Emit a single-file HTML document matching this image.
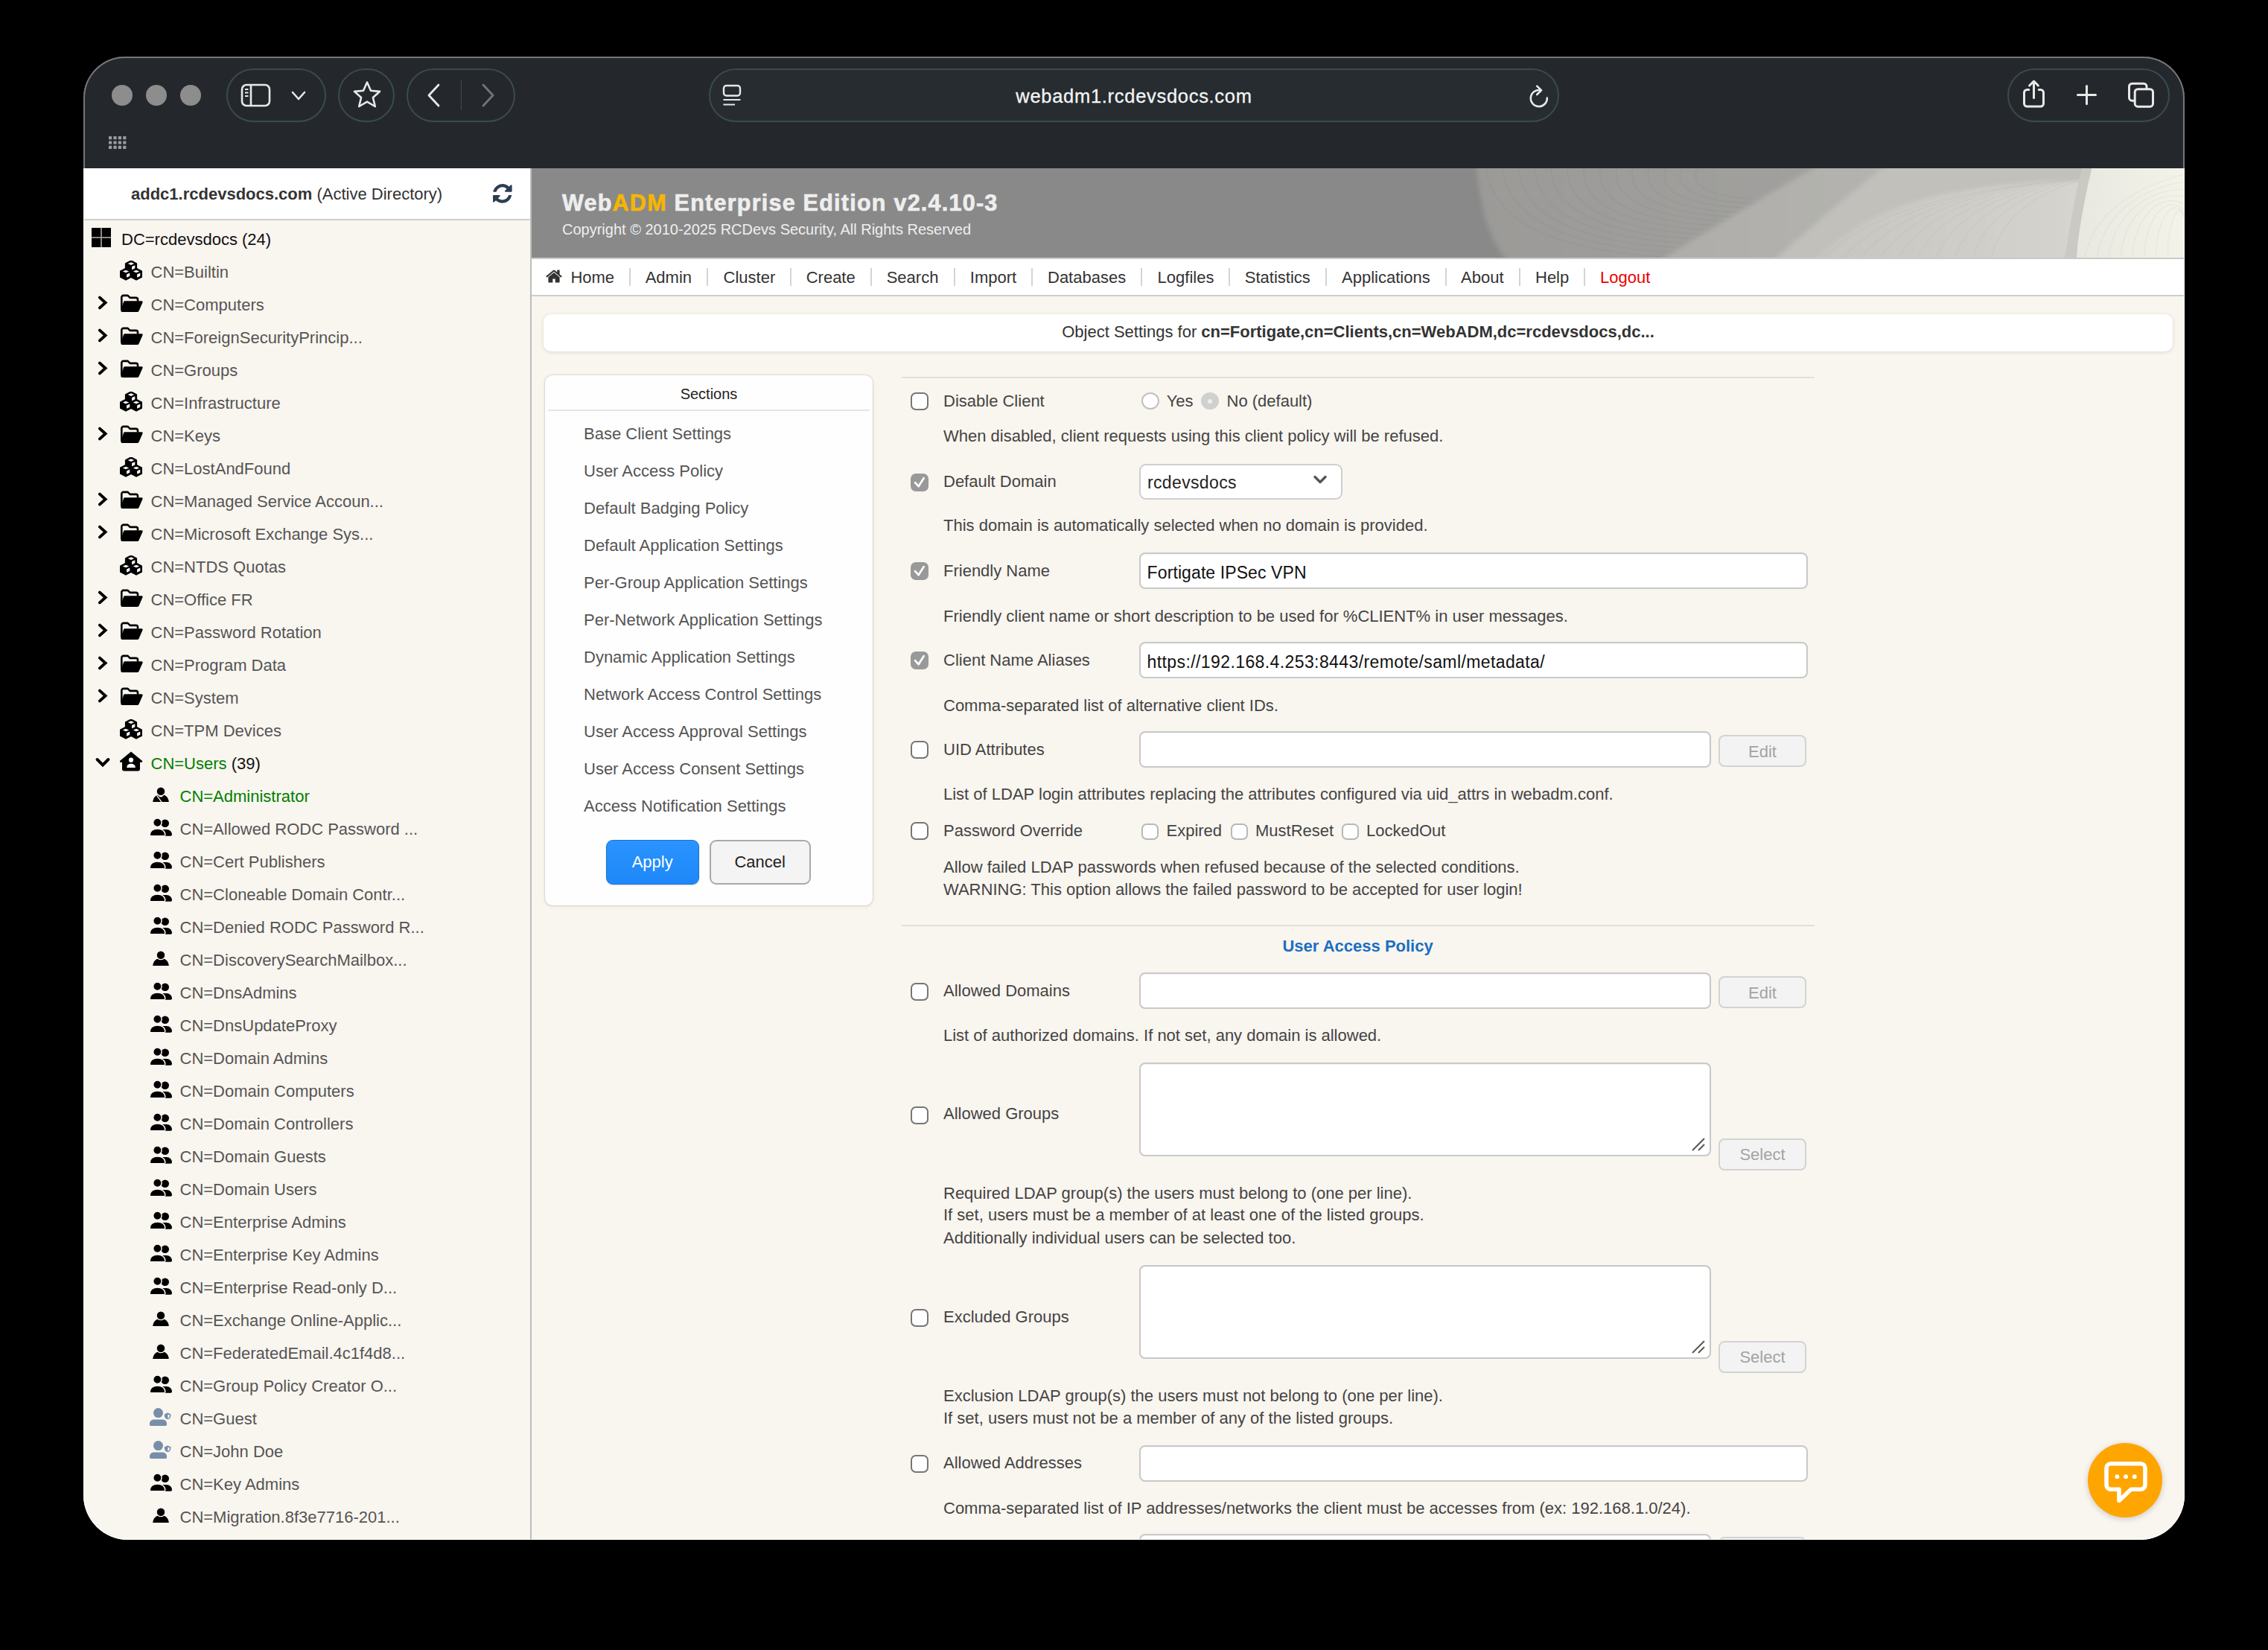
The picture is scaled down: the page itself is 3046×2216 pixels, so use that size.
<!DOCTYPE html>
<html><head><meta charset="utf-8"><title>WebADM</title>
<style>
html,body{margin:0;padding:0;}
body{width:3046px;height:2216px;background:#000;position:relative;overflow:hidden;font-family:"Liberation Sans",sans-serif;}
#win{position:absolute;left:112px;top:76px;width:2822px;height:1992px;border-radius:56px 56px 60px 60px;overflow:hidden;background:#f9f5ef;}
#frame{position:absolute;left:112px;top:76px;width:2822px;height:1992px;border-radius:56px 56px 60px 60px;box-sizing:border-box;border:2.2px solid #73777a;pointer-events:none;
  -webkit-mask:linear-gradient(#000 0,#000 150px,transparent 150px);}
#frame2{position:absolute;left:112px;top:76px;width:2822px;height:1992px;border-radius:56px 56px 60px 60px;box-sizing:border-box;border:1px solid rgba(255,255,255,0.85);pointer-events:none;-webkit-mask:linear-gradient(transparent 0,transparent 150px,#000 150px);}
.a{position:absolute;}
.t{position:absolute;white-space:nowrap;font-family:"Liberation Sans",sans-serif;}
</style></head>
<body>
<div id="win">
<div class="a" style="left:0.0px;top:0.0px;width:2822.0px;height:150.0px;background:#24282c;"></div>
<div class="a" style="left:38.0px;top:38.0px;width:28.0px;height:28.0px;background:#8d8d8d;border-radius:50%;"></div>
<div class="a" style="left:84.0px;top:38.0px;width:28.0px;height:28.0px;background:#8d8d8d;border-radius:50%;"></div>
<div class="a" style="left:130.0px;top:38.0px;width:28.0px;height:28.0px;background:#8d8d8d;border-radius:50%;"></div>
<svg class="a" style="left:34.0px;top:107.0px;" width="24" height="18" viewBox="0 0 24 18"><rect x="0.0" y="0.0" width="4.2" height="4.2" rx="0.6" fill="#9a9c9e"/><rect x="6.4" y="0.0" width="4.2" height="4.2" rx="0.6" fill="#9a9c9e"/><rect x="12.8" y="0.0" width="4.2" height="4.2" rx="0.6" fill="#9a9c9e"/><rect x="19.2" y="0.0" width="4.2" height="4.2" rx="0.6" fill="#9a9c9e"/><rect x="0.0" y="6.4" width="4.2" height="4.2" rx="0.6" fill="#9a9c9e"/><rect x="6.4" y="6.4" width="4.2" height="4.2" rx="0.6" fill="#9a9c9e"/><rect x="12.8" y="6.4" width="4.2" height="4.2" rx="0.6" fill="#9a9c9e"/><rect x="19.2" y="6.4" width="4.2" height="4.2" rx="0.6" fill="#9a9c9e"/><rect x="0.0" y="12.8" width="4.2" height="4.2" rx="0.6" fill="#9a9c9e"/><rect x="6.4" y="12.8" width="4.2" height="4.2" rx="0.6" fill="#9a9c9e"/><rect x="12.8" y="12.8" width="4.2" height="4.2" rx="0.6" fill="#9a9c9e"/><rect x="19.2" y="12.8" width="4.2" height="4.2" rx="0.6" fill="#9a9c9e"/></svg>
<div class="a" style="left:192.0px;top:16.0px;width:134.0px;height:72.0px;border:2px solid #3a4a52;border-radius:40px;box-sizing:border-box;"></div>
<div class="a" style="left:342.0px;top:16.0px;width:76.0px;height:72.0px;border:2px solid #3a4a52;border-radius:40px;box-sizing:border-box;"></div>
<div class="a" style="left:434.0px;top:16.0px;width:146.0px;height:72.0px;border:2px solid #3a4a52;border-radius:40px;box-sizing:border-box;"></div>
<div class="a" style="left:840.0px;top:16.0px;width:1142.0px;height:72.0px;border:2px solid #3a4a52;border-radius:40px;box-sizing:border-box;background:#262c30;"></div>
<div class="a" style="left:2584.0px;top:16.0px;width:218.0px;height:72.0px;border:2px solid #3a4a52;border-radius:40px;box-sizing:border-box;"></div>
<svg class="a" style="left:210.0px;top:35.0px;" width="43" height="34" viewBox="0 0 43 34"><rect x="3" y="3" width="37" height="28" rx="6" fill="none" stroke="#e8e8e8" stroke-width="2.6"/><line x1="15" y1="3" x2="15" y2="31" stroke="#e8e8e8" stroke-width="2.6"/><line x1="7" y1="9" x2="11.5" y2="9" stroke="#e8e8e8" stroke-width="2"/><line x1="7" y1="13.5" x2="11.5" y2="13.5" stroke="#e8e8e8" stroke-width="2"/><line x1="7" y1="18" x2="11.5" y2="18" stroke="#e8e8e8" stroke-width="2"/></svg>
<svg class="a" style="left:277.0px;top:44.0px;" width="24" height="18" viewBox="0 0 24 18"><path d="M4 4 L12 13 L20 4" fill="none" stroke="#e8e8e8" stroke-width="2.6" stroke-linecap="round" stroke-linejoin="round"/></svg>
<svg class="a" style="left:359.0px;top:30.0px;" width="44" height="42" viewBox="0 0 44 42"><path d="M22 4.5 L27 15.8 L39 16.9 L29.9 25 L32.8 37 L22 30.6 L11.2 37 L14.1 25 L5 16.9 L17 15.8 Z" fill="none" stroke="#e8e8e8" stroke-width="2.6" stroke-linejoin="round"/></svg>
<svg class="a" style="left:458.0px;top:34.0px;" width="26" height="36" viewBox="0 0 26 36"><path d="M19 4 L6 18 L19 32" fill="none" stroke="#e8e8e8" stroke-width="2.8" stroke-linecap="round" stroke-linejoin="round"/></svg>
<div class="a" style="left:506.5px;top:32.0px;width:1.5px;height:40.0px;background:#3f4a50;"></div>
<svg class="a" style="left:530.0px;top:34.0px;" width="26" height="36" viewBox="0 0 26 36"><path d="M7 4 L20 18 L7 32" fill="none" stroke="#70757a" stroke-width="2.8" stroke-linecap="round" stroke-linejoin="round"/></svg>
<svg class="a" style="left:857.0px;top:36.0px;" width="28" height="32" viewBox="0 0 28 32"><rect x="3" y="3" width="22" height="13.5" rx="3.5" fill="none" stroke="#e8e8e8" stroke-width="2.4"/><line x1="2.5" y1="22" x2="25.5" y2="22" stroke="#e8e8e8" stroke-width="2.2"/><line x1="2.5" y1="28.5" x2="18" y2="28.5" stroke="#e8e8e8" stroke-width="2.2"/></svg>
<div class="t" style="left:811.0px;width:1200px;text-align:center;top:41px;font-size:25.5px;line-height:25.5px;color:#f4f4f4;font-weight:400;letter-spacing:0.7px;-webkit-text-stroke:0.3px #f4f4f4;">webadm1.rcdevsdocs.com</div>
<svg class="a" style="left:1940.0px;top:36.0px;" width="32" height="34" viewBox="0 0 32 34"><path d="M25.8 19.5 A11 11 0 1 1 17 9.2" fill="none" stroke="#e8e8e8" stroke-width="2.6" stroke-linecap="round"/><path d="M12.2 3.6 L18 9.3 L12.2 15" fill="none" stroke="#e8e8e8" stroke-width="2.6" stroke-linecap="round" stroke-linejoin="round"/></svg>
<svg class="a" style="left:2602.0px;top:28.0px;" width="36" height="44" viewBox="0 0 36 44"><path d="M10.8 16.4 H8.5 A4 4 0 0 0 4.5 20.4 V35.1 A4 4 0 0 0 8.5 39.1 H26.5 A4 4 0 0 0 30.5 35.1 V20.4 A4 4 0 0 0 26.5 16.4 H24.2" fill="none" stroke="#e8e8e8" stroke-width="3" stroke-linecap="round"/><line x1="17.5" y1="6" x2="17.5" y2="27.6" stroke="#e8e8e8" stroke-width="3" stroke-linecap="round"/><path d="M11.6 11 L17.5 5 L23.4 11" fill="none" stroke="#e8e8e8" stroke-width="3" stroke-linecap="round" stroke-linejoin="round"/></svg>
<svg class="a" style="left:2674.0px;top:35.0px;" width="34" height="34" viewBox="0 0 34 34"><line x1="16.5" y1="4.5" x2="16.5" y2="28.5" stroke="#e8e8e8" stroke-width="3" stroke-linecap="round"/><line x1="4.5" y1="16.5" x2="28.5" y2="16.5" stroke="#e8e8e8" stroke-width="3" stroke-linecap="round"/></svg>
<svg class="a" style="left:2743.0px;top:32.0px;" width="42" height="40" viewBox="0 0 42 40"><path d="M12.2 27.2 H8.5 A4 4 0 0 1 4.5 23.2 V8.2 A4 4 0 0 1 8.5 4.2 H24 A4 4 0 0 1 28 8.2 V11.7" fill="none" stroke="#e8e8e8" stroke-width="3"/><rect x="12.2" y="11.7" width="24.3" height="23.5" rx="4" fill="none" stroke="#e8e8e8" stroke-width="3"/></svg>
<div class="a" style="left:0.0px;top:150.0px;width:600.0px;height:1842.0px;background:#f9f5ef;"></div>
<div class="a" style="left:0.0px;top:150.0px;width:600.0px;height:68.0px;background:#fff;"></div>
<div class="a" style="left:0.0px;top:218.0px;width:600.0px;height:2.0px;background:#cfcfcf;"></div>
<div class="a" style="left:600.0px;top:150.0px;width:2.0px;height:1842.0px;background:#bdbdbd;"></div>
<div class="t" style="left:64.0px;top:174px;font-size:22px;line-height:22px;color:#333;font-weight:400;"><b>addc1.rcdevsdocs.com</b> (Active Directory)</div>
<svg class="a" style="left:550.0px;top:171.0px;" width="25.6" height="25.8" viewBox="0 0 1536 1536"><path fill="#2c3e50" d="M1511 928q0 5-1 7-64 268-268 434.5T764 1536q-146 0-282.5-55T239 1324l-129 129q-19 19-45 19t-45-19-19-45V960q0-26 19-45t45-19h448q26 0 45 19t19 45-19 45l-137 137q71 66 161 102t187 36q134 0 250-65t186-179q11-17 53-117 8-23 30-23h192q13 0 22.5 9.5t9.5 22.5zm25-800v448q0 26-19 45t-45 19h-448q-26 0-45-19t-19-45 19-45l138-138Q969 256 768 256q-134 0-250 65T332 500q-11 17-53 117-8 23-30 23H50q-13 0-22.5-9.5T18 608v-7q65-268 270-434.5T768 0q146 0 284 55.5T1297 212l130-129q19-19 45-19t45 19 19 45z"/></svg>
<svg class="a" style="left:11.0px;top:230.0px;" width="26" height="26" viewBox="0 0 26 26"><rect x="0" y="0" width="26" height="26" fill="#000"/><line x1="13" y1="0" x2="13" y2="26" stroke="#9a9792" stroke-width="1.8"/><line x1="0" y1="13" x2="26" y2="13" stroke="#9a9792" stroke-width="1.8"/></svg>
<div class="t" style="left:51.0px;top:235px;font-size:22px;line-height:22px;color:#111;font-weight:400;">DC=rcdevsdocs (24)</div>
<svg class="a" style="left:49.0px;top:274.0px;" width="30" height="27" viewBox="0 0 30 27"><polygon points="15,0.20000000000000018 22.2,4.0 22.2,11.6 15,15.399999999999999 7.8,11.6 7.8,4.0" fill="#000" stroke="#000" stroke-width="1.8" stroke-linejoin="round"/><polygon points="10.8,4.1 15,2.3 19.2,4.1 15,5.9" fill="#fff"/><polygon points="16.1,8.1 20.3,6.199999999999999 20.3,10.4 16.1,12.399999999999999" fill="#fff"/><polygon points="8,10.6 15.2,14.399999999999999 15.2,22.0 8,25.799999999999997 0.7999999999999998,22.0 0.7999999999999998,14.399999999999999" fill="#000" stroke="#000" stroke-width="1.8" stroke-linejoin="round"/><polygon points="3.8,14.5 8,12.7 12.2,14.5 8,16.3" fill="#fff"/><polygon points="9.1,18.5 13.3,16.599999999999998 13.3,20.8 9.1,22.799999999999997" fill="#fff"/><polygon points="22,10.6 29.2,14.399999999999999 29.2,22.0 22,25.799999999999997 14.8,22.0 14.8,14.399999999999999" fill="#000" stroke="#000" stroke-width="1.8" stroke-linejoin="round"/><polygon points="17.8,14.5 22,12.7 26.2,14.5 22,16.3" fill="#fff"/><polygon points="23.1,18.5 27.3,16.599999999999998 27.3,20.8 23.1,22.799999999999997" fill="#fff"/></svg>
<div class="t" style="left:90.5px;top:279px;font-size:22px;line-height:22px;color:#555;font-weight:400;">CN=Builtin</div>
<svg class="a" style="left:48.5px;top:318.7px;" width="31" height="25" viewBox="0 0 31 25"><path d="M2.3 21 V4.3 A2.4 2.4 0 0 1 4.7 1.9 H10.6 L13.6 4.9 H21.6 A2.4 2.4 0 0 1 24 7.3 V9.6" fill="none" stroke="#000" stroke-width="2.6" stroke-linejoin="round"/><path d="M6.4 9.2 H29 A1.6 1.6 0 0 1 30.4 11.4 L25.6 22.4 A2.6 2.6 0 0 1 23.2 24 H3.2 A2 2 0 0 1 1.2 22 L5 10.4 A1.8 1.8 0 0 1 6.4 9.2 Z" fill="#000"/></svg>
<svg class="a" style="left:19.0px;top:320.5px;" width="14" height="19" viewBox="0 0 14 19"><path d="M3 2.6 L10.6 9.5 L3 16.4" fill="none" stroke="#000" stroke-width="3.9" stroke-linecap="round" stroke-linejoin="miter"/></svg>
<div class="t" style="left:90.5px;top:323px;font-size:22px;line-height:22px;color:#555;font-weight:400;">CN=Computers</div>
<svg class="a" style="left:48.5px;top:362.7px;" width="31" height="25" viewBox="0 0 31 25"><path d="M2.3 21 V4.3 A2.4 2.4 0 0 1 4.7 1.9 H10.6 L13.6 4.9 H21.6 A2.4 2.4 0 0 1 24 7.3 V9.6" fill="none" stroke="#000" stroke-width="2.6" stroke-linejoin="round"/><path d="M6.4 9.2 H29 A1.6 1.6 0 0 1 30.4 11.4 L25.6 22.4 A2.6 2.6 0 0 1 23.2 24 H3.2 A2 2 0 0 1 1.2 22 L5 10.4 A1.8 1.8 0 0 1 6.4 9.2 Z" fill="#000"/></svg>
<svg class="a" style="left:19.0px;top:364.5px;" width="14" height="19" viewBox="0 0 14 19"><path d="M3 2.6 L10.6 9.5 L3 16.4" fill="none" stroke="#000" stroke-width="3.9" stroke-linecap="round" stroke-linejoin="miter"/></svg>
<div class="t" style="left:90.5px;top:367px;font-size:22px;line-height:22px;color:#555;font-weight:400;">CN=ForeignSecurityPrincip...</div>
<svg class="a" style="left:48.5px;top:406.7px;" width="31" height="25" viewBox="0 0 31 25"><path d="M2.3 21 V4.3 A2.4 2.4 0 0 1 4.7 1.9 H10.6 L13.6 4.9 H21.6 A2.4 2.4 0 0 1 24 7.3 V9.6" fill="none" stroke="#000" stroke-width="2.6" stroke-linejoin="round"/><path d="M6.4 9.2 H29 A1.6 1.6 0 0 1 30.4 11.4 L25.6 22.4 A2.6 2.6 0 0 1 23.2 24 H3.2 A2 2 0 0 1 1.2 22 L5 10.4 A1.8 1.8 0 0 1 6.4 9.2 Z" fill="#000"/></svg>
<svg class="a" style="left:19.0px;top:408.5px;" width="14" height="19" viewBox="0 0 14 19"><path d="M3 2.6 L10.6 9.5 L3 16.4" fill="none" stroke="#000" stroke-width="3.9" stroke-linecap="round" stroke-linejoin="miter"/></svg>
<div class="t" style="left:90.5px;top:411px;font-size:22px;line-height:22px;color:#555;font-weight:400;">CN=Groups</div>
<svg class="a" style="left:49.0px;top:450.0px;" width="30" height="27" viewBox="0 0 30 27"><polygon points="15,0.20000000000000018 22.2,4.0 22.2,11.6 15,15.399999999999999 7.8,11.6 7.8,4.0" fill="#000" stroke="#000" stroke-width="1.8" stroke-linejoin="round"/><polygon points="10.8,4.1 15,2.3 19.2,4.1 15,5.9" fill="#fff"/><polygon points="16.1,8.1 20.3,6.199999999999999 20.3,10.4 16.1,12.399999999999999" fill="#fff"/><polygon points="8,10.6 15.2,14.399999999999999 15.2,22.0 8,25.799999999999997 0.7999999999999998,22.0 0.7999999999999998,14.399999999999999" fill="#000" stroke="#000" stroke-width="1.8" stroke-linejoin="round"/><polygon points="3.8,14.5 8,12.7 12.2,14.5 8,16.3" fill="#fff"/><polygon points="9.1,18.5 13.3,16.599999999999998 13.3,20.8 9.1,22.799999999999997" fill="#fff"/><polygon points="22,10.6 29.2,14.399999999999999 29.2,22.0 22,25.799999999999997 14.8,22.0 14.8,14.399999999999999" fill="#000" stroke="#000" stroke-width="1.8" stroke-linejoin="round"/><polygon points="17.8,14.5 22,12.7 26.2,14.5 22,16.3" fill="#fff"/><polygon points="23.1,18.5 27.3,16.599999999999998 27.3,20.8 23.1,22.799999999999997" fill="#fff"/></svg>
<div class="t" style="left:90.5px;top:455px;font-size:22px;line-height:22px;color:#555;font-weight:400;">CN=Infrastructure</div>
<svg class="a" style="left:48.5px;top:494.7px;" width="31" height="25" viewBox="0 0 31 25"><path d="M2.3 21 V4.3 A2.4 2.4 0 0 1 4.7 1.9 H10.6 L13.6 4.9 H21.6 A2.4 2.4 0 0 1 24 7.3 V9.6" fill="none" stroke="#000" stroke-width="2.6" stroke-linejoin="round"/><path d="M6.4 9.2 H29 A1.6 1.6 0 0 1 30.4 11.4 L25.6 22.4 A2.6 2.6 0 0 1 23.2 24 H3.2 A2 2 0 0 1 1.2 22 L5 10.4 A1.8 1.8 0 0 1 6.4 9.2 Z" fill="#000"/></svg>
<svg class="a" style="left:19.0px;top:496.5px;" width="14" height="19" viewBox="0 0 14 19"><path d="M3 2.6 L10.6 9.5 L3 16.4" fill="none" stroke="#000" stroke-width="3.9" stroke-linecap="round" stroke-linejoin="miter"/></svg>
<div class="t" style="left:90.5px;top:499px;font-size:22px;line-height:22px;color:#555;font-weight:400;">CN=Keys</div>
<svg class="a" style="left:49.0px;top:538.0px;" width="30" height="27" viewBox="0 0 30 27"><polygon points="15,0.20000000000000018 22.2,4.0 22.2,11.6 15,15.399999999999999 7.8,11.6 7.8,4.0" fill="#000" stroke="#000" stroke-width="1.8" stroke-linejoin="round"/><polygon points="10.8,4.1 15,2.3 19.2,4.1 15,5.9" fill="#fff"/><polygon points="16.1,8.1 20.3,6.199999999999999 20.3,10.4 16.1,12.399999999999999" fill="#fff"/><polygon points="8,10.6 15.2,14.399999999999999 15.2,22.0 8,25.799999999999997 0.7999999999999998,22.0 0.7999999999999998,14.399999999999999" fill="#000" stroke="#000" stroke-width="1.8" stroke-linejoin="round"/><polygon points="3.8,14.5 8,12.7 12.2,14.5 8,16.3" fill="#fff"/><polygon points="9.1,18.5 13.3,16.599999999999998 13.3,20.8 9.1,22.799999999999997" fill="#fff"/><polygon points="22,10.6 29.2,14.399999999999999 29.2,22.0 22,25.799999999999997 14.8,22.0 14.8,14.399999999999999" fill="#000" stroke="#000" stroke-width="1.8" stroke-linejoin="round"/><polygon points="17.8,14.5 22,12.7 26.2,14.5 22,16.3" fill="#fff"/><polygon points="23.1,18.5 27.3,16.599999999999998 27.3,20.8 23.1,22.799999999999997" fill="#fff"/></svg>
<div class="t" style="left:90.5px;top:543px;font-size:22px;line-height:22px;color:#555;font-weight:400;">CN=LostAndFound</div>
<svg class="a" style="left:48.5px;top:582.7px;" width="31" height="25" viewBox="0 0 31 25"><path d="M2.3 21 V4.3 A2.4 2.4 0 0 1 4.7 1.9 H10.6 L13.6 4.9 H21.6 A2.4 2.4 0 0 1 24 7.3 V9.6" fill="none" stroke="#000" stroke-width="2.6" stroke-linejoin="round"/><path d="M6.4 9.2 H29 A1.6 1.6 0 0 1 30.4 11.4 L25.6 22.4 A2.6 2.6 0 0 1 23.2 24 H3.2 A2 2 0 0 1 1.2 22 L5 10.4 A1.8 1.8 0 0 1 6.4 9.2 Z" fill="#000"/></svg>
<svg class="a" style="left:19.0px;top:584.5px;" width="14" height="19" viewBox="0 0 14 19"><path d="M3 2.6 L10.6 9.5 L3 16.4" fill="none" stroke="#000" stroke-width="3.9" stroke-linecap="round" stroke-linejoin="miter"/></svg>
<div class="t" style="left:90.5px;top:587px;font-size:22px;line-height:22px;color:#555;font-weight:400;">CN=Managed Service Accoun...</div>
<svg class="a" style="left:48.5px;top:626.7px;" width="31" height="25" viewBox="0 0 31 25"><path d="M2.3 21 V4.3 A2.4 2.4 0 0 1 4.7 1.9 H10.6 L13.6 4.9 H21.6 A2.4 2.4 0 0 1 24 7.3 V9.6" fill="none" stroke="#000" stroke-width="2.6" stroke-linejoin="round"/><path d="M6.4 9.2 H29 A1.6 1.6 0 0 1 30.4 11.4 L25.6 22.4 A2.6 2.6 0 0 1 23.2 24 H3.2 A2 2 0 0 1 1.2 22 L5 10.4 A1.8 1.8 0 0 1 6.4 9.2 Z" fill="#000"/></svg>
<svg class="a" style="left:19.0px;top:628.5px;" width="14" height="19" viewBox="0 0 14 19"><path d="M3 2.6 L10.6 9.5 L3 16.4" fill="none" stroke="#000" stroke-width="3.9" stroke-linecap="round" stroke-linejoin="miter"/></svg>
<div class="t" style="left:90.5px;top:631px;font-size:22px;line-height:22px;color:#555;font-weight:400;">CN=Microsoft Exchange Sys...</div>
<svg class="a" style="left:49.0px;top:670.0px;" width="30" height="27" viewBox="0 0 30 27"><polygon points="15,0.20000000000000018 22.2,4.0 22.2,11.6 15,15.399999999999999 7.8,11.6 7.8,4.0" fill="#000" stroke="#000" stroke-width="1.8" stroke-linejoin="round"/><polygon points="10.8,4.1 15,2.3 19.2,4.1 15,5.9" fill="#fff"/><polygon points="16.1,8.1 20.3,6.199999999999999 20.3,10.4 16.1,12.399999999999999" fill="#fff"/><polygon points="8,10.6 15.2,14.399999999999999 15.2,22.0 8,25.799999999999997 0.7999999999999998,22.0 0.7999999999999998,14.399999999999999" fill="#000" stroke="#000" stroke-width="1.8" stroke-linejoin="round"/><polygon points="3.8,14.5 8,12.7 12.2,14.5 8,16.3" fill="#fff"/><polygon points="9.1,18.5 13.3,16.599999999999998 13.3,20.8 9.1,22.799999999999997" fill="#fff"/><polygon points="22,10.6 29.2,14.399999999999999 29.2,22.0 22,25.799999999999997 14.8,22.0 14.8,14.399999999999999" fill="#000" stroke="#000" stroke-width="1.8" stroke-linejoin="round"/><polygon points="17.8,14.5 22,12.7 26.2,14.5 22,16.3" fill="#fff"/><polygon points="23.1,18.5 27.3,16.599999999999998 27.3,20.8 23.1,22.799999999999997" fill="#fff"/></svg>
<div class="t" style="left:90.5px;top:675px;font-size:22px;line-height:22px;color:#555;font-weight:400;">CN=NTDS Quotas</div>
<svg class="a" style="left:48.5px;top:714.7px;" width="31" height="25" viewBox="0 0 31 25"><path d="M2.3 21 V4.3 A2.4 2.4 0 0 1 4.7 1.9 H10.6 L13.6 4.9 H21.6 A2.4 2.4 0 0 1 24 7.3 V9.6" fill="none" stroke="#000" stroke-width="2.6" stroke-linejoin="round"/><path d="M6.4 9.2 H29 A1.6 1.6 0 0 1 30.4 11.4 L25.6 22.4 A2.6 2.6 0 0 1 23.2 24 H3.2 A2 2 0 0 1 1.2 22 L5 10.4 A1.8 1.8 0 0 1 6.4 9.2 Z" fill="#000"/></svg>
<svg class="a" style="left:19.0px;top:716.5px;" width="14" height="19" viewBox="0 0 14 19"><path d="M3 2.6 L10.6 9.5 L3 16.4" fill="none" stroke="#000" stroke-width="3.9" stroke-linecap="round" stroke-linejoin="miter"/></svg>
<div class="t" style="left:90.5px;top:719px;font-size:22px;line-height:22px;color:#555;font-weight:400;">CN=Office FR</div>
<svg class="a" style="left:48.5px;top:758.7px;" width="31" height="25" viewBox="0 0 31 25"><path d="M2.3 21 V4.3 A2.4 2.4 0 0 1 4.7 1.9 H10.6 L13.6 4.9 H21.6 A2.4 2.4 0 0 1 24 7.3 V9.6" fill="none" stroke="#000" stroke-width="2.6" stroke-linejoin="round"/><path d="M6.4 9.2 H29 A1.6 1.6 0 0 1 30.4 11.4 L25.6 22.4 A2.6 2.6 0 0 1 23.2 24 H3.2 A2 2 0 0 1 1.2 22 L5 10.4 A1.8 1.8 0 0 1 6.4 9.2 Z" fill="#000"/></svg>
<svg class="a" style="left:19.0px;top:760.5px;" width="14" height="19" viewBox="0 0 14 19"><path d="M3 2.6 L10.6 9.5 L3 16.4" fill="none" stroke="#000" stroke-width="3.9" stroke-linecap="round" stroke-linejoin="miter"/></svg>
<div class="t" style="left:90.5px;top:763px;font-size:22px;line-height:22px;color:#555;font-weight:400;">CN=Password Rotation</div>
<svg class="a" style="left:48.5px;top:802.7px;" width="31" height="25" viewBox="0 0 31 25"><path d="M2.3 21 V4.3 A2.4 2.4 0 0 1 4.7 1.9 H10.6 L13.6 4.9 H21.6 A2.4 2.4 0 0 1 24 7.3 V9.6" fill="none" stroke="#000" stroke-width="2.6" stroke-linejoin="round"/><path d="M6.4 9.2 H29 A1.6 1.6 0 0 1 30.4 11.4 L25.6 22.4 A2.6 2.6 0 0 1 23.2 24 H3.2 A2 2 0 0 1 1.2 22 L5 10.4 A1.8 1.8 0 0 1 6.4 9.2 Z" fill="#000"/></svg>
<svg class="a" style="left:19.0px;top:804.5px;" width="14" height="19" viewBox="0 0 14 19"><path d="M3 2.6 L10.6 9.5 L3 16.4" fill="none" stroke="#000" stroke-width="3.9" stroke-linecap="round" stroke-linejoin="miter"/></svg>
<div class="t" style="left:90.5px;top:807px;font-size:22px;line-height:22px;color:#555;font-weight:400;">CN=Program Data</div>
<svg class="a" style="left:48.5px;top:846.7px;" width="31" height="25" viewBox="0 0 31 25"><path d="M2.3 21 V4.3 A2.4 2.4 0 0 1 4.7 1.9 H10.6 L13.6 4.9 H21.6 A2.4 2.4 0 0 1 24 7.3 V9.6" fill="none" stroke="#000" stroke-width="2.6" stroke-linejoin="round"/><path d="M6.4 9.2 H29 A1.6 1.6 0 0 1 30.4 11.4 L25.6 22.4 A2.6 2.6 0 0 1 23.2 24 H3.2 A2 2 0 0 1 1.2 22 L5 10.4 A1.8 1.8 0 0 1 6.4 9.2 Z" fill="#000"/></svg>
<svg class="a" style="left:19.0px;top:848.5px;" width="14" height="19" viewBox="0 0 14 19"><path d="M3 2.6 L10.6 9.5 L3 16.4" fill="none" stroke="#000" stroke-width="3.9" stroke-linecap="round" stroke-linejoin="miter"/></svg>
<div class="t" style="left:90.5px;top:851px;font-size:22px;line-height:22px;color:#555;font-weight:400;">CN=System</div>
<svg class="a" style="left:49.0px;top:890.0px;" width="30" height="27" viewBox="0 0 30 27"><polygon points="15,0.20000000000000018 22.2,4.0 22.2,11.6 15,15.399999999999999 7.8,11.6 7.8,4.0" fill="#000" stroke="#000" stroke-width="1.8" stroke-linejoin="round"/><polygon points="10.8,4.1 15,2.3 19.2,4.1 15,5.9" fill="#fff"/><polygon points="16.1,8.1 20.3,6.199999999999999 20.3,10.4 16.1,12.399999999999999" fill="#fff"/><polygon points="8,10.6 15.2,14.399999999999999 15.2,22.0 8,25.799999999999997 0.7999999999999998,22.0 0.7999999999999998,14.399999999999999" fill="#000" stroke="#000" stroke-width="1.8" stroke-linejoin="round"/><polygon points="3.8,14.5 8,12.7 12.2,14.5 8,16.3" fill="#fff"/><polygon points="9.1,18.5 13.3,16.599999999999998 13.3,20.8 9.1,22.799999999999997" fill="#fff"/><polygon points="22,10.6 29.2,14.399999999999999 29.2,22.0 22,25.799999999999997 14.8,22.0 14.8,14.399999999999999" fill="#000" stroke="#000" stroke-width="1.8" stroke-linejoin="round"/><polygon points="17.8,14.5 22,12.7 26.2,14.5 22,16.3" fill="#fff"/><polygon points="23.1,18.5 27.3,16.599999999999998 27.3,20.8 23.1,22.799999999999997" fill="#fff"/></svg>
<div class="t" style="left:90.5px;top:895px;font-size:22px;line-height:22px;color:#555;font-weight:400;">CN=TPM Devices</div>
<svg class="a" style="left:49.0px;top:933.4px;" width="31" height="28" viewBox="0 0 31 28"><path d="M15 0.4 L29.6 12.6 Q30.8 13.8 29.6 14.8 L27 14.8 V23.8 A2.6 2.6 0 0 1 24.4 26.4 H5.6 A2.6 2.6 0 0 1 3 23.8 V14.8 L0.4 14.8 Q-0.8 13.8 0.4 12.6 Z" fill="#000"/><circle cx="15" cy="11.7" r="3.1" fill="#fff"/><path d="M9.3 21.4 C9.3 18.6 11.8 16.7 15 16.7 C18.2 16.7 20.8 18.6 20.8 21.4 V22 H9.3 Z" fill="#fff"/></svg>
<svg class="a" style="left:16.0px;top:940.5px;" width="20" height="14" viewBox="0 0 20 14"><path d="M2.6 3 L10 10.4 L17.4 3" fill="none" stroke="#000" stroke-width="3.9" stroke-linecap="round" stroke-linejoin="miter"/></svg>
<div class="t" style="left:90.5px;top:939px;font-size:22px;line-height:22px;color:#111;font-weight:400;"><span style="color:#008000">CN=Users</span> (39)</div>
<svg class="a" style="left:93.0px;top:981.0px;" width="22" height="21" viewBox="0 0 22 21"><path d="M0.2 19.9 C0.7 14.6 4.2 10.8 8 10.6 H14 C17.8 10.8 21.3 14.6 21.8 19.9 Z" fill="#000"/><path d="M7.2 11 L11 14.8 L14.8 11 Z" fill="#fff"/><path d="M10.2 13.2 H11.8 L12.2 16 L11 17 L9.8 16 Z" fill="#000"/><line x1="5.6" y1="11.4" x2="12" y2="20.2" stroke="#fff" stroke-width="1.3"/><circle cx="11" cy="5.8" r="5.9" fill="#000" stroke="#f9f5ef" stroke-width="1.3"/></svg>
<div class="t" style="left:129.5px;top:983px;font-size:22px;line-height:22px;color:#008000;font-weight:400;">CN=Administrator</div>
<svg class="a" style="left:89.0px;top:1021.0px;" width="31" height="27" viewBox="0 0 31 27"><circle cx="20.7" cy="8.7" r="5.3" fill="#000"/><path d="M17 17 H22.5 C26.8 17 30 20.2 30 24 A1.8 1.8 0 0 1 28.2 25.8 H20 Z" fill="#000"/><circle cx="10.4" cy="7.8" r="5.7" fill="#000" stroke="#f9f5ef" stroke-width="1.5"/><path d="M0.2 24 C0.2 19.5 4.5 15.9 10.5 15.9 C16.5 15.9 20.8 19.5 20.8 24 A1.8 1.8 0 0 1 19 25.8 H2 A1.8 1.8 0 0 1 0.2 24 Z" fill="#000" stroke="#f9f5ef" stroke-width="1.5"/></svg>
<div class="t" style="left:129.5px;top:1027px;font-size:22px;line-height:22px;color:#555;font-weight:400;">CN=Allowed RODC Password ...</div>
<svg class="a" style="left:89.0px;top:1065.0px;" width="31" height="27" viewBox="0 0 31 27"><circle cx="20.7" cy="8.7" r="5.3" fill="#000"/><path d="M17 17 H22.5 C26.8 17 30 20.2 30 24 A1.8 1.8 0 0 1 28.2 25.8 H20 Z" fill="#000"/><circle cx="10.4" cy="7.8" r="5.7" fill="#000" stroke="#f9f5ef" stroke-width="1.5"/><path d="M0.2 24 C0.2 19.5 4.5 15.9 10.5 15.9 C16.5 15.9 20.8 19.5 20.8 24 A1.8 1.8 0 0 1 19 25.8 H2 A1.8 1.8 0 0 1 0.2 24 Z" fill="#000" stroke="#f9f5ef" stroke-width="1.5"/></svg>
<div class="t" style="left:129.5px;top:1071px;font-size:22px;line-height:22px;color:#555;font-weight:400;">CN=Cert Publishers</div>
<svg class="a" style="left:89.0px;top:1109.0px;" width="31" height="27" viewBox="0 0 31 27"><circle cx="20.7" cy="8.7" r="5.3" fill="#000"/><path d="M17 17 H22.5 C26.8 17 30 20.2 30 24 A1.8 1.8 0 0 1 28.2 25.8 H20 Z" fill="#000"/><circle cx="10.4" cy="7.8" r="5.7" fill="#000" stroke="#f9f5ef" stroke-width="1.5"/><path d="M0.2 24 C0.2 19.5 4.5 15.9 10.5 15.9 C16.5 15.9 20.8 19.5 20.8 24 A1.8 1.8 0 0 1 19 25.8 H2 A1.8 1.8 0 0 1 0.2 24 Z" fill="#000" stroke="#f9f5ef" stroke-width="1.5"/></svg>
<div class="t" style="left:129.5px;top:1115px;font-size:22px;line-height:22px;color:#555;font-weight:400;">CN=Cloneable Domain Contr...</div>
<svg class="a" style="left:89.0px;top:1153.0px;" width="31" height="27" viewBox="0 0 31 27"><circle cx="20.7" cy="8.7" r="5.3" fill="#000"/><path d="M17 17 H22.5 C26.8 17 30 20.2 30 24 A1.8 1.8 0 0 1 28.2 25.8 H20 Z" fill="#000"/><circle cx="10.4" cy="7.8" r="5.7" fill="#000" stroke="#f9f5ef" stroke-width="1.5"/><path d="M0.2 24 C0.2 19.5 4.5 15.9 10.5 15.9 C16.5 15.9 20.8 19.5 20.8 24 A1.8 1.8 0 0 1 19 25.8 H2 A1.8 1.8 0 0 1 0.2 24 Z" fill="#000" stroke="#f9f5ef" stroke-width="1.5"/></svg>
<div class="t" style="left:129.5px;top:1159px;font-size:22px;line-height:22px;color:#555;font-weight:400;">CN=Denied RODC Password R...</div>
<svg class="a" style="left:93.0px;top:1201.0px;" width="22" height="21" viewBox="0 0 22 21"><path d="M0.2 19.9 C0.7 14.6 4.2 10.8 8 10.6 H14 C17.8 10.8 21.3 14.6 21.8 19.9 Z" fill="#000"/><circle cx="11" cy="5.8" r="5.9" fill="#000" stroke="#f9f5ef" stroke-width="1.3"/></svg>
<div class="t" style="left:129.5px;top:1203px;font-size:22px;line-height:22px;color:#555;font-weight:400;">CN=DiscoverySearchMailbox...</div>
<svg class="a" style="left:89.0px;top:1241.0px;" width="31" height="27" viewBox="0 0 31 27"><circle cx="20.7" cy="8.7" r="5.3" fill="#000"/><path d="M17 17 H22.5 C26.8 17 30 20.2 30 24 A1.8 1.8 0 0 1 28.2 25.8 H20 Z" fill="#000"/><circle cx="10.4" cy="7.8" r="5.7" fill="#000" stroke="#f9f5ef" stroke-width="1.5"/><path d="M0.2 24 C0.2 19.5 4.5 15.9 10.5 15.9 C16.5 15.9 20.8 19.5 20.8 24 A1.8 1.8 0 0 1 19 25.8 H2 A1.8 1.8 0 0 1 0.2 24 Z" fill="#000" stroke="#f9f5ef" stroke-width="1.5"/></svg>
<div class="t" style="left:129.5px;top:1247px;font-size:22px;line-height:22px;color:#555;font-weight:400;">CN=DnsAdmins</div>
<svg class="a" style="left:89.0px;top:1285.0px;" width="31" height="27" viewBox="0 0 31 27"><circle cx="20.7" cy="8.7" r="5.3" fill="#000"/><path d="M17 17 H22.5 C26.8 17 30 20.2 30 24 A1.8 1.8 0 0 1 28.2 25.8 H20 Z" fill="#000"/><circle cx="10.4" cy="7.8" r="5.7" fill="#000" stroke="#f9f5ef" stroke-width="1.5"/><path d="M0.2 24 C0.2 19.5 4.5 15.9 10.5 15.9 C16.5 15.9 20.8 19.5 20.8 24 A1.8 1.8 0 0 1 19 25.8 H2 A1.8 1.8 0 0 1 0.2 24 Z" fill="#000" stroke="#f9f5ef" stroke-width="1.5"/></svg>
<div class="t" style="left:129.5px;top:1291px;font-size:22px;line-height:22px;color:#555;font-weight:400;">CN=DnsUpdateProxy</div>
<svg class="a" style="left:89.0px;top:1329.0px;" width="31" height="27" viewBox="0 0 31 27"><circle cx="20.7" cy="8.7" r="5.3" fill="#000"/><path d="M17 17 H22.5 C26.8 17 30 20.2 30 24 A1.8 1.8 0 0 1 28.2 25.8 H20 Z" fill="#000"/><circle cx="10.4" cy="7.8" r="5.7" fill="#000" stroke="#f9f5ef" stroke-width="1.5"/><path d="M0.2 24 C0.2 19.5 4.5 15.9 10.5 15.9 C16.5 15.9 20.8 19.5 20.8 24 A1.8 1.8 0 0 1 19 25.8 H2 A1.8 1.8 0 0 1 0.2 24 Z" fill="#000" stroke="#f9f5ef" stroke-width="1.5"/></svg>
<div class="t" style="left:129.5px;top:1335px;font-size:22px;line-height:22px;color:#555;font-weight:400;">CN=Domain Admins</div>
<svg class="a" style="left:89.0px;top:1373.0px;" width="31" height="27" viewBox="0 0 31 27"><circle cx="20.7" cy="8.7" r="5.3" fill="#000"/><path d="M17 17 H22.5 C26.8 17 30 20.2 30 24 A1.8 1.8 0 0 1 28.2 25.8 H20 Z" fill="#000"/><circle cx="10.4" cy="7.8" r="5.7" fill="#000" stroke="#f9f5ef" stroke-width="1.5"/><path d="M0.2 24 C0.2 19.5 4.5 15.9 10.5 15.9 C16.5 15.9 20.8 19.5 20.8 24 A1.8 1.8 0 0 1 19 25.8 H2 A1.8 1.8 0 0 1 0.2 24 Z" fill="#000" stroke="#f9f5ef" stroke-width="1.5"/></svg>
<div class="t" style="left:129.5px;top:1379px;font-size:22px;line-height:22px;color:#555;font-weight:400;">CN=Domain Computers</div>
<svg class="a" style="left:89.0px;top:1417.0px;" width="31" height="27" viewBox="0 0 31 27"><circle cx="20.7" cy="8.7" r="5.3" fill="#000"/><path d="M17 17 H22.5 C26.8 17 30 20.2 30 24 A1.8 1.8 0 0 1 28.2 25.8 H20 Z" fill="#000"/><circle cx="10.4" cy="7.8" r="5.7" fill="#000" stroke="#f9f5ef" stroke-width="1.5"/><path d="M0.2 24 C0.2 19.5 4.5 15.9 10.5 15.9 C16.5 15.9 20.8 19.5 20.8 24 A1.8 1.8 0 0 1 19 25.8 H2 A1.8 1.8 0 0 1 0.2 24 Z" fill="#000" stroke="#f9f5ef" stroke-width="1.5"/></svg>
<div class="t" style="left:129.5px;top:1423px;font-size:22px;line-height:22px;color:#555;font-weight:400;">CN=Domain Controllers</div>
<svg class="a" style="left:89.0px;top:1461.0px;" width="31" height="27" viewBox="0 0 31 27"><circle cx="20.7" cy="8.7" r="5.3" fill="#000"/><path d="M17 17 H22.5 C26.8 17 30 20.2 30 24 A1.8 1.8 0 0 1 28.2 25.8 H20 Z" fill="#000"/><circle cx="10.4" cy="7.8" r="5.7" fill="#000" stroke="#f9f5ef" stroke-width="1.5"/><path d="M0.2 24 C0.2 19.5 4.5 15.9 10.5 15.9 C16.5 15.9 20.8 19.5 20.8 24 A1.8 1.8 0 0 1 19 25.8 H2 A1.8 1.8 0 0 1 0.2 24 Z" fill="#000" stroke="#f9f5ef" stroke-width="1.5"/></svg>
<div class="t" style="left:129.5px;top:1467px;font-size:22px;line-height:22px;color:#555;font-weight:400;">CN=Domain Guests</div>
<svg class="a" style="left:89.0px;top:1505.0px;" width="31" height="27" viewBox="0 0 31 27"><circle cx="20.7" cy="8.7" r="5.3" fill="#000"/><path d="M17 17 H22.5 C26.8 17 30 20.2 30 24 A1.8 1.8 0 0 1 28.2 25.8 H20 Z" fill="#000"/><circle cx="10.4" cy="7.8" r="5.7" fill="#000" stroke="#f9f5ef" stroke-width="1.5"/><path d="M0.2 24 C0.2 19.5 4.5 15.9 10.5 15.9 C16.5 15.9 20.8 19.5 20.8 24 A1.8 1.8 0 0 1 19 25.8 H2 A1.8 1.8 0 0 1 0.2 24 Z" fill="#000" stroke="#f9f5ef" stroke-width="1.5"/></svg>
<div class="t" style="left:129.5px;top:1511px;font-size:22px;line-height:22px;color:#555;font-weight:400;">CN=Domain Users</div>
<svg class="a" style="left:89.0px;top:1549.0px;" width="31" height="27" viewBox="0 0 31 27"><circle cx="20.7" cy="8.7" r="5.3" fill="#000"/><path d="M17 17 H22.5 C26.8 17 30 20.2 30 24 A1.8 1.8 0 0 1 28.2 25.8 H20 Z" fill="#000"/><circle cx="10.4" cy="7.8" r="5.7" fill="#000" stroke="#f9f5ef" stroke-width="1.5"/><path d="M0.2 24 C0.2 19.5 4.5 15.9 10.5 15.9 C16.5 15.9 20.8 19.5 20.8 24 A1.8 1.8 0 0 1 19 25.8 H2 A1.8 1.8 0 0 1 0.2 24 Z" fill="#000" stroke="#f9f5ef" stroke-width="1.5"/></svg>
<div class="t" style="left:129.5px;top:1555px;font-size:22px;line-height:22px;color:#555;font-weight:400;">CN=Enterprise Admins</div>
<svg class="a" style="left:89.0px;top:1593.0px;" width="31" height="27" viewBox="0 0 31 27"><circle cx="20.7" cy="8.7" r="5.3" fill="#000"/><path d="M17 17 H22.5 C26.8 17 30 20.2 30 24 A1.8 1.8 0 0 1 28.2 25.8 H20 Z" fill="#000"/><circle cx="10.4" cy="7.8" r="5.7" fill="#000" stroke="#f9f5ef" stroke-width="1.5"/><path d="M0.2 24 C0.2 19.5 4.5 15.9 10.5 15.9 C16.5 15.9 20.8 19.5 20.8 24 A1.8 1.8 0 0 1 19 25.8 H2 A1.8 1.8 0 0 1 0.2 24 Z" fill="#000" stroke="#f9f5ef" stroke-width="1.5"/></svg>
<div class="t" style="left:129.5px;top:1599px;font-size:22px;line-height:22px;color:#555;font-weight:400;">CN=Enterprise Key Admins</div>
<svg class="a" style="left:89.0px;top:1637.0px;" width="31" height="27" viewBox="0 0 31 27"><circle cx="20.7" cy="8.7" r="5.3" fill="#000"/><path d="M17 17 H22.5 C26.8 17 30 20.2 30 24 A1.8 1.8 0 0 1 28.2 25.8 H20 Z" fill="#000"/><circle cx="10.4" cy="7.8" r="5.7" fill="#000" stroke="#f9f5ef" stroke-width="1.5"/><path d="M0.2 24 C0.2 19.5 4.5 15.9 10.5 15.9 C16.5 15.9 20.8 19.5 20.8 24 A1.8 1.8 0 0 1 19 25.8 H2 A1.8 1.8 0 0 1 0.2 24 Z" fill="#000" stroke="#f9f5ef" stroke-width="1.5"/></svg>
<div class="t" style="left:129.5px;top:1643px;font-size:22px;line-height:22px;color:#555;font-weight:400;">CN=Enterprise Read-only D...</div>
<svg class="a" style="left:93.0px;top:1685.0px;" width="22" height="21" viewBox="0 0 22 21"><path d="M0.2 19.9 C0.7 14.6 4.2 10.8 8 10.6 H14 C17.8 10.8 21.3 14.6 21.8 19.9 Z" fill="#000"/><circle cx="11" cy="5.8" r="5.9" fill="#000" stroke="#f9f5ef" stroke-width="1.3"/></svg>
<div class="t" style="left:129.5px;top:1687px;font-size:22px;line-height:22px;color:#555;font-weight:400;">CN=Exchange Online-Applic...</div>
<svg class="a" style="left:93.0px;top:1729.0px;" width="22" height="21" viewBox="0 0 22 21"><path d="M0.2 19.9 C0.7 14.6 4.2 10.8 8 10.6 H14 C17.8 10.8 21.3 14.6 21.8 19.9 Z" fill="#000"/><circle cx="11" cy="5.8" r="5.9" fill="#000" stroke="#f9f5ef" stroke-width="1.3"/></svg>
<div class="t" style="left:129.5px;top:1731px;font-size:22px;line-height:22px;color:#555;font-weight:400;">CN=FederatedEmail.4c1f4d8...</div>
<svg class="a" style="left:89.0px;top:1769.0px;" width="31" height="27" viewBox="0 0 31 27"><circle cx="20.7" cy="8.7" r="5.3" fill="#000"/><path d="M17 17 H22.5 C26.8 17 30 20.2 30 24 A1.8 1.8 0 0 1 28.2 25.8 H20 Z" fill="#000"/><circle cx="10.4" cy="7.8" r="5.7" fill="#000" stroke="#f9f5ef" stroke-width="1.5"/><path d="M0.2 24 C0.2 19.5 4.5 15.9 10.5 15.9 C16.5 15.9 20.8 19.5 20.8 24 A1.8 1.8 0 0 1 19 25.8 H2 A1.8 1.8 0 0 1 0.2 24 Z" fill="#000" stroke="#f9f5ef" stroke-width="1.5"/></svg>
<div class="t" style="left:129.5px;top:1775px;font-size:22px;line-height:22px;color:#555;font-weight:400;">CN=Group Policy Creator O...</div>
<svg class="a" style="left:89.0px;top:1815.0px;" width="31" height="25" viewBox="0 0 31 25"><circle cx="11.5" cy="6.6" r="6.5" fill="#768ea9"/><path d="M0 22.2 V20.8 C0 17.8 2.4 15.4 5.6 15.4 H17.4 C20.6 15.4 23 17.8 23 20.8 V22.2 A1.8 1.8 0 0 1 21.2 24 H1.8 A1.8 1.8 0 0 1 0 22.2 Z" fill="#768ea9"/><path d="M24.15 5.8 L29 7.9 V10 C29 13 27 15.3 24.15 15.9 C21.3 15.3 19.3 13 19.3 10 V7.9 Z" fill="#768ea9" stroke="#f9f5ef" stroke-width="1.2"/><path d="M24.4 8.6 L26.8 9.6 V10.4 C26.8 12.1 25.9 13.4 24.4 14.1 Z" fill="#f9f5ef"/></svg>
<div class="t" style="left:129.5px;top:1819px;font-size:22px;line-height:22px;color:#555;font-weight:400;">CN=Guest</div>
<svg class="a" style="left:89.0px;top:1859.0px;" width="31" height="25" viewBox="0 0 31 25"><circle cx="11.5" cy="6.6" r="6.5" fill="#768ea9"/><path d="M0 22.2 V20.8 C0 17.8 2.4 15.4 5.6 15.4 H17.4 C20.6 15.4 23 17.8 23 20.8 V22.2 A1.8 1.8 0 0 1 21.2 24 H1.8 A1.8 1.8 0 0 1 0 22.2 Z" fill="#768ea9"/><path d="M24.15 5.8 L29 7.9 V10 C29 13 27 15.3 24.15 15.9 C21.3 15.3 19.3 13 19.3 10 V7.9 Z" fill="#768ea9" stroke="#f9f5ef" stroke-width="1.2"/><path d="M24.4 8.6 L26.8 9.6 V10.4 C26.8 12.1 25.9 13.4 24.4 14.1 Z" fill="#f9f5ef"/></svg>
<div class="t" style="left:129.5px;top:1863px;font-size:22px;line-height:22px;color:#555;font-weight:400;">CN=John Doe</div>
<svg class="a" style="left:89.0px;top:1901.0px;" width="31" height="27" viewBox="0 0 31 27"><circle cx="20.7" cy="8.7" r="5.3" fill="#000"/><path d="M17 17 H22.5 C26.8 17 30 20.2 30 24 A1.8 1.8 0 0 1 28.2 25.8 H20 Z" fill="#000"/><circle cx="10.4" cy="7.8" r="5.7" fill="#000" stroke="#f9f5ef" stroke-width="1.5"/><path d="M0.2 24 C0.2 19.5 4.5 15.9 10.5 15.9 C16.5 15.9 20.8 19.5 20.8 24 A1.8 1.8 0 0 1 19 25.8 H2 A1.8 1.8 0 0 1 0.2 24 Z" fill="#000" stroke="#f9f5ef" stroke-width="1.5"/></svg>
<div class="t" style="left:129.5px;top:1907px;font-size:22px;line-height:22px;color:#555;font-weight:400;">CN=Key Admins</div>
<svg class="a" style="left:93.0px;top:1949.0px;" width="22" height="21" viewBox="0 0 22 21"><path d="M0.2 19.9 C0.7 14.6 4.2 10.8 8 10.6 H14 C17.8 10.8 21.3 14.6 21.8 19.9 Z" fill="#000"/><circle cx="11" cy="5.8" r="5.9" fill="#000" stroke="#f9f5ef" stroke-width="1.3"/></svg>
<div class="t" style="left:129.5px;top:1951px;font-size:22px;line-height:22px;color:#555;font-weight:400;">CN=Migration.8f3e7716-201...</div>
<svg class="a" style="left:89.0px;top:1989.0px;" width="31" height="27" viewBox="0 0 31 27"><circle cx="20.7" cy="8.7" r="5.3" fill="#000"/><path d="M17 17 H22.5 C26.8 17 30 20.2 30 24 A1.8 1.8 0 0 1 28.2 25.8 H20 Z" fill="#000"/><circle cx="10.4" cy="7.8" r="5.7" fill="#000" stroke="#f9f5ef" stroke-width="1.5"/><path d="M0.2 24 C0.2 19.5 4.5 15.9 10.5 15.9 C16.5 15.9 20.8 19.5 20.8 24 A1.8 1.8 0 0 1 19 25.8 H2 A1.8 1.8 0 0 1 0.2 24 Z" fill="#000" stroke="#f9f5ef" stroke-width="1.5"/></svg>
<div class="a" style="left:602.0px;top:150.0px;width:2220.0px;height:120.0px;background:#898989;overflow:hidden;"></div>
<svg class="a" style="left:602.0px;top:150.0px;" width="2220" height="120" viewBox="714 0 2220 120"><defs><linearGradient id="gfan" x1="0" y1="0" x2="1" y2="0"><stop offset="0" stop-color="#9b9a98"/><stop offset="1" stop-color="#a9a8a5"/></linearGradient><linearGradient id="grib" x1="0" y1="0" x2="1" y2="0"><stop offset="0" stop-color="#aeada9"/><stop offset="1" stop-color="#bdbcb8"/></linearGradient><linearGradient id="glt" x1="0" y1="0" x2="1" y2="0"><stop offset="0" stop-color="#c6c5c0"/><stop offset="1" stop-color="#dcdbd5"/></linearGradient><filter id="bl3" x="-5%" y="-20%" width="110%" height="140%"><feGaussianBlur stdDeviation="3"/></filter><linearGradient id="gcr" x1="0" y1="0" x2="1" y2="0"><stop offset="0" stop-color="#e9e8e0"/><stop offset="1" stop-color="#f4f3ea"/></linearGradient></defs><rect x="714" y="0" width="1300" height="120" fill="#898989"/><path d="M1982 -10 C1988 50 1998 100 2030 130 L2960 130 L2960 -10 Z" fill="url(#gfan)" filter="url(#bl3)"/><path d="M1995 0 C2005 60 2060 110 2250 120" fill="none" stroke="#7d7d7b" stroke-opacity="0.16" stroke-width="1.3"/><path d="M2017 0 C2025 57 2078 105 2262 114" fill="none" stroke="#7d7d7b" stroke-opacity="0.16" stroke-width="1.3"/><path d="M2039 0 C2045 54 2096 100 2274 108" fill="none" stroke="#7d7d7b" stroke-opacity="0.16" stroke-width="1.3"/><path d="M2061 0 C2065 51 2114 95 2286 102" fill="none" stroke="#7d7d7b" stroke-opacity="0.16" stroke-width="1.3"/><path d="M2083 0 C2085 48 2132 90 2298 96" fill="none" stroke="#7d7d7b" stroke-opacity="0.16" stroke-width="1.3"/><path d="M2105 0 C2105 45 2150 85 2310 90" fill="none" stroke="#7d7d7b" stroke-opacity="0.16" stroke-width="1.3"/><path d="M2127 0 C2125 42 2168 80 2322 84" fill="none" stroke="#7d7d7b" stroke-opacity="0.16" stroke-width="1.3"/><path d="M2149 0 C2145 39 2186 75 2334 78" fill="none" stroke="#7d7d7b" stroke-opacity="0.16" stroke-width="1.3"/><path d="M2171 0 C2165 36 2204 70 2346 72" fill="none" stroke="#7d7d7b" stroke-opacity="0.16" stroke-width="1.3"/><path d="M2193 0 C2185 33 2222 65 2358 66" fill="none" stroke="#7d7d7b" stroke-opacity="0.16" stroke-width="1.3"/><path d="M2215 0 C2205 30 2240 60 2370 60" fill="none" stroke="#7d7d7b" stroke-opacity="0.16" stroke-width="1.3"/><path d="M2237 0 C2225 27 2258 55 2382 54" fill="none" stroke="#7d7d7b" stroke-opacity="0.16" stroke-width="1.3"/><path d="M2259 0 C2245 24 2276 50 2394 48" fill="none" stroke="#7d7d7b" stroke-opacity="0.16" stroke-width="1.3"/><path d="M2281 0 C2265 21 2294 45 2406 42" fill="none" stroke="#7d7d7b" stroke-opacity="0.16" stroke-width="1.3"/><path d="M2220 130 C2300 80 2380 30 2455 -10 L2960 -10 L2960 130 Z" fill="url(#grib)" filter="url(#bl3)"/><path d="M2375 130 C2430 80 2490 30 2540 -10 L2960 -10 L2960 130 Z" fill="#c1c0bb" filter="url(#bl3)"/><path d="M2430 130 C2480 80 2540 45 2640 30 C2700 20 2760 15 2960 10 L2960 130 Z" fill="url(#glt)" filter="url(#bl3)"/><path d="M2450 120 C2490 80 2560 45 2700 25" fill="none" stroke="#9a9a96" stroke-opacity="0.12" stroke-width="1.2"/><path d="M2475 120 C2512 78 2580 43 2714 23" fill="none" stroke="#9a9a96" stroke-opacity="0.12" stroke-width="1.2"/><path d="M2500 120 C2534 76 2600 41 2728 21" fill="none" stroke="#9a9a96" stroke-opacity="0.12" stroke-width="1.2"/><path d="M2525 120 C2556 74 2620 39 2742 19" fill="none" stroke="#9a9a96" stroke-opacity="0.12" stroke-width="1.2"/><path d="M2550 120 C2578 72 2640 37 2756 17" fill="none" stroke="#9a9a96" stroke-opacity="0.12" stroke-width="1.2"/><path d="M2575 120 C2600 70 2660 35 2770 15" fill="none" stroke="#9a9a96" stroke-opacity="0.12" stroke-width="1.2"/><path d="M2600 120 C2622 68 2680 33 2784 13" fill="none" stroke="#9a9a96" stroke-opacity="0.12" stroke-width="1.2"/><path d="M2625 120 C2644 66 2700 31 2798 11" fill="none" stroke="#9a9a96" stroke-opacity="0.12" stroke-width="1.2"/><path d="M2650 120 C2666 64 2720 29 2812 9" fill="none" stroke="#9a9a96" stroke-opacity="0.12" stroke-width="1.2"/><path d="M2675 120 C2688 62 2740 27 2826 7" fill="none" stroke="#9a9a96" stroke-opacity="0.12" stroke-width="1.2"/><path d="M2809 0 C2800 40 2790 90 2789 120 L2934 120 L2934 0 Z" fill="url(#gcr)"/><path d="M2800 120 C2810 70 2850 30 2934 8" fill="none" stroke="#b0afa6" stroke-opacity="0.14" stroke-width="1.2"/><path d="M2816 120 C2824 70 2862 30 2934 18" fill="none" stroke="#b0afa6" stroke-opacity="0.14" stroke-width="1.2"/><path d="M2832 120 C2838 70 2874 30 2934 28" fill="none" stroke="#b0afa6" stroke-opacity="0.14" stroke-width="1.2"/><path d="M2848 120 C2852 70 2886 30 2934 38" fill="none" stroke="#b0afa6" stroke-opacity="0.14" stroke-width="1.2"/><path d="M2864 120 C2866 70 2898 30 2934 48" fill="none" stroke="#b0afa6" stroke-opacity="0.14" stroke-width="1.2"/><path d="M2880 120 C2880 70 2910 30 2934 58" fill="none" stroke="#b0afa6" stroke-opacity="0.14" stroke-width="1.2"/><path d="M2896 120 C2894 70 2922 30 2934 68" fill="none" stroke="#b0afa6" stroke-opacity="0.14" stroke-width="1.2"/><path d="M2912 120 C2908 70 2934 30 2934 78" fill="none" stroke="#b0afa6" stroke-opacity="0.14" stroke-width="1.2"/><path d="M2796 0 L2809 0 C2800 40 2790 90 2789 120 L2773 120 C2778 90 2786 40 2796 0 Z" fill="#cac9c4"/></svg>
<div class="t" style="left:643.0px;top:181px;font-size:30.5px;line-height:30.5px;color:#eeeeee;font-weight:700;letter-spacing:1.25px;-webkit-text-stroke:0.7px #eeeeee;">Web<span style="color:#f7b500;-webkit-text-stroke:0.7px #f7b500">ADM</span> Enterprise Edition v2.4.10-3</div>
<div class="t" style="left:643.0px;top:222px;font-size:20px;line-height:20px;color:#efefef;font-weight:400;">Copyright © 2010-2025 RCDevs Security, All Rights Reserved</div>
<div class="a" style="left:602.0px;top:270.0px;width:2220.0px;height:2.0px;background:#c9c9c9;"></div>
<div class="a" style="left:602.0px;top:272.0px;width:2220.0px;height:48.0px;background:#fff;"></div>
<div class="a" style="left:602.0px;top:320.0px;width:2220.0px;height:2.0px;background:#cdcdcd;"></div>
<div class="a" style="left:602.0px;top:322.0px;width:2220.0px;height:1670.0px;background:#f9f5ef;"></div>
<svg class="a" style="left:621.0px;top:286.0px;" width="22" height="19" viewBox="0 0 1664 1408"><path fill="#333" d="M1408 768v480q0 26-19 45t-45 19H960V928H704v384H320q-26 0-45-19t-19-45V768q0-1 .5-3t.5-3l575-474 575 474q1 2 1 6zm223-69l-62 74q-8 9-21 11h-3q-13 0-21-7L832 200 140 777q-12 8-24 7-13-2-21-11l-62-74q-8-10-7-23.5T37 654L756 55q32-26 76-26t76 26l244 204V64q0-14 9-23t23-9h192q14 0 23 9t9 23v408l219 182q10 8 11 21.5t-7 23.5z"/></svg>
<div class="t" style="left:654.4px;top:286px;font-size:22px;line-height:22px;color:#333;font-weight:400;">Home</div>
<div class="t" style="left:754.7px;top:286px;font-size:22px;line-height:22px;color:#333;font-weight:400;">Admin</div>
<div class="t" style="left:859.6px;top:286px;font-size:22px;line-height:22px;color:#333;font-weight:400;">Cluster</div>
<div class="t" style="left:970.7px;top:286px;font-size:22px;line-height:22px;color:#333;font-weight:400;">Create</div>
<div class="t" style="left:1078.7px;top:286px;font-size:22px;line-height:22px;color:#333;font-weight:400;">Search</div>
<div class="t" style="left:1190.8px;top:286px;font-size:22px;line-height:22px;color:#333;font-weight:400;">Import</div>
<div class="t" style="left:1295.0px;top:286px;font-size:22px;line-height:22px;color:#333;font-weight:400;">Databases</div>
<div class="t" style="left:1442.6px;top:286px;font-size:22px;line-height:22px;color:#333;font-weight:400;">Logfiles</div>
<div class="t" style="left:1559.8px;top:286px;font-size:22px;line-height:22px;color:#333;font-weight:400;">Statistics</div>
<div class="t" style="left:1690.0px;top:286px;font-size:22px;line-height:22px;color:#333;font-weight:400;">Applications</div>
<div class="t" style="left:1850.0px;top:286px;font-size:22px;line-height:22px;color:#333;font-weight:400;">About</div>
<div class="t" style="left:1950.0px;top:286px;font-size:22px;line-height:22px;color:#333;font-weight:400;">Help</div>
<div class="t" style="left:2037.0px;top:286px;font-size:22px;line-height:22px;color:#ee0000;font-weight:400;">Logout</div>
<div class="a" style="left:733.0px;top:284.0px;width:2.0px;height:24.0px;background:#d4d4d4;"></div>
<div class="a" style="left:837.0px;top:284.0px;width:2.0px;height:24.0px;background:#d4d4d4;"></div>
<div class="a" style="left:948.7px;top:284.0px;width:2.0px;height:24.0px;background:#d4d4d4;"></div>
<div class="a" style="left:1057.0px;top:284.0px;width:2.0px;height:24.0px;background:#d4d4d4;"></div>
<div class="a" style="left:1169.0px;top:284.0px;width:2.0px;height:24.0px;background:#d4d4d4;"></div>
<div class="a" style="left:1273.0px;top:284.0px;width:2.0px;height:24.0px;background:#d4d4d4;"></div>
<div class="a" style="left:1420.0px;top:284.0px;width:2.0px;height:24.0px;background:#d4d4d4;"></div>
<div class="a" style="left:1538.0px;top:284.0px;width:2.0px;height:24.0px;background:#d4d4d4;"></div>
<div class="a" style="left:1668.0px;top:284.0px;width:2.0px;height:24.0px;background:#d4d4d4;"></div>
<div class="a" style="left:1829.0px;top:284.0px;width:2.0px;height:24.0px;background:#d4d4d4;"></div>
<div class="a" style="left:1928.0px;top:284.0px;width:2.0px;height:24.0px;background:#d4d4d4;"></div>
<div class="a" style="left:2015.0px;top:284.0px;width:2.0px;height:24.0px;background:#d4d4d4;"></div>
<div class="a" style="left:618.0px;top:346.0px;width:2188.0px;height:50.0px;background:#fff;border-radius:10px;box-shadow:0 1px 5px rgba(90,70,40,0.16);"></div>
<div class="t" style="left:1112.0px;width:1200px;text-align:center;top:359px;font-size:22px;line-height:22px;color:#333;font-weight:400;width:1800px;left:812.0px;">Object Settings for <b>cn=Fortigate,cn=Clients,cn=WebADM,dc=rcdevsdocs,dc...</b></div>
<div class="a" style="left:620.0px;top:428.0px;width:440.0px;height:712.0px;background:#fefefe;border-radius:10px;box-shadow:0 0 0 1px rgba(0,0,0,0.07),0 1px 5px rgba(90,70,40,0.14);"></div>
<div class="t" style="left:240.0px;width:1200px;text-align:center;top:443px;font-size:20px;line-height:20px;color:#222;font-weight:400;">Sections</div>
<div class="a" style="left:624.0px;top:474.0px;width:432.0px;height:2.0px;background:#e6e6e6;"></div>
<div class="t" style="left:672.0px;top:496px;font-size:22px;line-height:22px;color:#555;font-weight:400;">Base Client Settings</div>
<div class="t" style="left:672.0px;top:546px;font-size:22px;line-height:22px;color:#555;font-weight:400;">User Access Policy</div>
<div class="t" style="left:672.0px;top:596px;font-size:22px;line-height:22px;color:#555;font-weight:400;">Default Badging Policy</div>
<div class="t" style="left:672.0px;top:646px;font-size:22px;line-height:22px;color:#555;font-weight:400;">Default Application Settings</div>
<div class="t" style="left:672.0px;top:696px;font-size:22px;line-height:22px;color:#555;font-weight:400;">Per-Group Application Settings</div>
<div class="t" style="left:672.0px;top:746px;font-size:22px;line-height:22px;color:#555;font-weight:400;">Per-Network Application Settings</div>
<div class="t" style="left:672.0px;top:796px;font-size:22px;line-height:22px;color:#555;font-weight:400;">Dynamic Application Settings</div>
<div class="t" style="left:672.0px;top:846px;font-size:22px;line-height:22px;color:#555;font-weight:400;">Network Access Control Settings</div>
<div class="t" style="left:672.0px;top:896px;font-size:22px;line-height:22px;color:#555;font-weight:400;">User Access Approval Settings</div>
<div class="t" style="left:672.0px;top:946px;font-size:22px;line-height:22px;color:#555;font-weight:400;">User Access Consent Settings</div>
<div class="t" style="left:672.0px;top:996px;font-size:22px;line-height:22px;color:#555;font-weight:400;">Access Notification Settings</div>
<div class="a" style="left:702.0px;top:1052.0px;width:124.5px;height:59.5px;background:linear-gradient(#2a93ff,#1e88f8);border:1.5px solid #1673d8;border-radius:9px;box-sizing:border-box;box-shadow:0 1px 2px rgba(0,0,0,0.15);"></div>
<div class="t" style="left:164.2px;width:1200px;text-align:center;top:1071px;font-size:22px;line-height:22px;color:#fff;font-weight:400;">Apply</div>
<div class="a" style="left:841.0px;top:1052.0px;width:135.5px;height:59.5px;background:#f4f4f4;border:2px solid #a9a9a9;border-radius:9px;box-sizing:border-box;"></div>
<div class="t" style="left:308.7px;width:1200px;text-align:center;top:1071px;font-size:22px;line-height:22px;color:#222;font-weight:400;">Cancel</div>
<div class="a" style="left:1099.0px;top:430.0px;width:1226.0px;height:2.0px;background:#e2deda;"></div>
<div class="a" style="left:1111.0px;top:450.5px;width:24.0px;height:24.0px;background:#fff;border:2.5px solid #767676;border-radius:7px;box-sizing:border-box;"></div>
<div class="t" style="left:1155.0px;top:452px;font-size:22px;line-height:22px;color:#444;font-weight:400;">Disable Client</div>
<div class="a" style="left:1421.0px;top:451.0px;width:24.0px;height:23.0px;background:#fff;border:2.5px solid #c0c0c0;border-radius:50%;box-sizing:border-box;"></div>
<div class="t" style="left:1454.7px;top:452px;font-size:22px;line-height:22px;color:#444;font-weight:400;">Yes</div>
<div class="a" style="left:1501.0px;top:451.0px;width:24.0px;height:23.0px;background:#d0d0d0;border-radius:50%;"></div>
<div class="a" style="left:1510.0px;top:459.5px;width:6.0px;height:6.0px;background:#eee;border-radius:50%;"></div>
<div class="t" style="left:1535.5px;top:452px;font-size:22px;line-height:22px;color:#444;font-weight:400;">No (default)</div>
<div class="t" style="left:1155.0px;top:499px;font-size:22px;line-height:22px;color:#444;font-weight:400;">When disabled, client requests using this client policy will be refused.</div>
<div class="a" style="left:1111.0px;top:560.0px;width:24.0px;height:24.0px;background:#999;border-radius:7px;"></div><svg class="a" style="left:1111.0px;top:560.0px;" width="24" height="24" viewBox="0 0 24 24"><path d="M6.1 12.1 L10.6 17.2 L17.6 6.2" fill="none" stroke="#fff" stroke-width="2.7" stroke-linecap="round" stroke-linejoin="round"/></svg>
<div class="t" style="left:1155.0px;top:560px;font-size:22px;line-height:22px;color:#444;font-weight:400;">Default Domain</div>
<div class="a" style="left:1418.0px;top:547.0px;width:272.5px;height:48.0px;background:#fff;border:2px solid #cfcfcf;border-radius:9px;box-sizing:border-box;"></div>
<div class="t" style="left:1429.0px;top:561px;font-size:23px;line-height:23px;color:#222;font-weight:400;letter-spacing:0.35px;">rcdevsdocs</div>
<svg class="a" style="left:1650.0px;top:560.0px;" width="22" height="17" viewBox="0 0 22 17"><path d="M4 4.5 L11 11.5 L18 4.5" fill="none" stroke="#555" stroke-width="3.4" stroke-linecap="round" stroke-linejoin="round"/></svg>
<div class="t" style="left:1155.0px;top:619px;font-size:22px;line-height:22px;color:#444;font-weight:400;">This domain is automatically selected when no domain is provided.</div>
<div class="a" style="left:1111.0px;top:679.0px;width:24.0px;height:24.0px;background:#999;border-radius:7px;"></div><svg class="a" style="left:1111.0px;top:679.0px;" width="24" height="24" viewBox="0 0 24 24"><path d="M6.1 12.1 L10.6 17.2 L17.6 6.2" fill="none" stroke="#fff" stroke-width="2.7" stroke-linecap="round" stroke-linejoin="round"/></svg>
<div class="t" style="left:1155.0px;top:680px;font-size:22px;line-height:22px;color:#444;font-weight:400;">Friendly Name</div>
<div class="a" style="left:1418.0px;top:666.0px;width:898.0px;height:49.0px;background:#fff;border:2px solid #c9c9c9;border-radius:8px;box-sizing:border-box;box-shadow:inset 0 1px 1px rgba(0,0,0,0.05);"></div>
<div class="t" style="left:1428.6px;top:682px;font-size:23px;line-height:23px;color:#111;font-weight:400;letter-spacing:0.1px;">Fortigate IPSec VPN</div>
<div class="t" style="left:1155.0px;top:741px;font-size:22px;line-height:22px;color:#444;font-weight:400;">Friendly client name or short description to be used for %CLIENT% in user messages.</div>
<div class="a" style="left:1111.0px;top:799.0px;width:24.0px;height:24.0px;background:#999;border-radius:7px;"></div><svg class="a" style="left:1111.0px;top:799.0px;" width="24" height="24" viewBox="0 0 24 24"><path d="M6.1 12.1 L10.6 17.2 L17.6 6.2" fill="none" stroke="#fff" stroke-width="2.7" stroke-linecap="round" stroke-linejoin="round"/></svg>
<div class="t" style="left:1155.0px;top:800px;font-size:22px;line-height:22px;color:#444;font-weight:400;">Client Name Aliases</div>
<div class="a" style="left:1418.0px;top:786.0px;width:898.0px;height:49.0px;background:#fff;border:2px solid #c9c9c9;border-radius:8px;box-sizing:border-box;box-shadow:inset 0 1px 1px rgba(0,0,0,0.05);"></div>
<div class="t" style="left:1428.6px;top:802px;font-size:23px;line-height:23px;color:#111;font-weight:400;letter-spacing:0.4px;">https://192.168.4.253:8443/remote/saml/metadata/</div>
<div class="t" style="left:1155.0px;top:861px;font-size:22px;line-height:22px;color:#444;font-weight:400;">Comma-separated list of alternative client IDs.</div>
<div class="a" style="left:1111.0px;top:919.0px;width:24.0px;height:24.0px;background:#fff;border:2.5px solid #767676;border-radius:7px;box-sizing:border-box;"></div>
<div class="t" style="left:1155.0px;top:920px;font-size:22px;line-height:22px;color:#444;font-weight:400;">UID Attributes</div>
<div class="a" style="left:1418.0px;top:906.0px;width:768.0px;height:49.0px;background:#fff;border:2px solid #c9c9c9;border-radius:8px;box-sizing:border-box;box-shadow:inset 0 1px 1px rgba(0,0,0,0.05);"></div>
<div class="a" style="left:2196.0px;top:911.0px;width:118.0px;height:42.5px;background:#f3f3f3;border:2px solid #d3d3d3;border-radius:8px;box-sizing:border-box;"></div><div class="t" style="left:1655.0px;width:1200px;text-align:center;top:923px;font-size:22px;line-height:22px;color:#a3a3a3;font-weight:400;">Edit</div>
<div class="t" style="left:1155.0px;top:980px;font-size:22px;line-height:22px;color:#444;font-weight:400;">List of LDAP login attributes replacing the attributes configured via uid_attrs in webadm.conf.</div>
<div class="a" style="left:1111.0px;top:1028.0px;width:24.0px;height:24.0px;background:#fff;border:2.5px solid #767676;border-radius:7px;box-sizing:border-box;"></div>
<div class="t" style="left:1155.0px;top:1029px;font-size:22px;line-height:22px;color:#444;font-weight:400;">Password Override</div>
<div class="a" style="left:1421.0px;top:1029.5px;width:22.5px;height:22.0px;background:#fff;border:2px solid #b8b8b8;border-radius:7px;box-sizing:border-box;"></div>
<div class="t" style="left:1454.5px;top:1029px;font-size:22px;line-height:22px;color:#444;font-weight:400;">Expired</div>
<div class="a" style="left:1541.0px;top:1029.5px;width:22.5px;height:22.0px;background:#fff;border:2px solid #b8b8b8;border-radius:7px;box-sizing:border-box;"></div>
<div class="t" style="left:1574.0px;top:1029px;font-size:22px;line-height:22px;color:#444;font-weight:400;">MustReset</div>
<div class="a" style="left:1690.4px;top:1029.5px;width:22.5px;height:22.0px;background:#fff;border:2px solid #b8b8b8;border-radius:7px;box-sizing:border-box;"></div>
<div class="t" style="left:1723.0px;top:1029px;font-size:22px;line-height:22px;color:#444;font-weight:400;">LockedOut</div>
<div class="t" style="left:1155.0px;top:1078px;font-size:22px;line-height:22px;color:#444;font-weight:400;">Allow failed LDAP passwords when refused because of the selected conditions.</div>
<div class="t" style="left:1155.0px;top:1108px;font-size:22px;line-height:22px;color:#444;font-weight:400;">WARNING: This option allows the failed password to be accepted for user login!</div>
<div class="a" style="left:1099.0px;top:1166.0px;width:1226.0px;height:2.0px;background:#e2deda;"></div>
<div class="t" style="left:1111.6px;width:1200px;text-align:center;top:1184px;font-size:22px;line-height:22px;color:#1b6ec2;font-weight:700;">User Access Policy</div>
<div class="a" style="left:1111.0px;top:1243.5px;width:24.0px;height:24.0px;background:#fff;border:2.5px solid #767676;border-radius:7px;box-sizing:border-box;"></div>
<div class="t" style="left:1155.0px;top:1244px;font-size:22px;line-height:22px;color:#444;font-weight:400;">Allowed Domains</div>
<div class="a" style="left:1418.0px;top:1230.0px;width:768.0px;height:49.0px;background:#fff;border:2px solid #c9c9c9;border-radius:8px;box-sizing:border-box;box-shadow:inset 0 1px 1px rgba(0,0,0,0.05);"></div>
<div class="a" style="left:2196.0px;top:1235.0px;width:118.0px;height:42.5px;background:#f3f3f3;border:2px solid #d3d3d3;border-radius:8px;box-sizing:border-box;"></div><div class="t" style="left:1655.0px;width:1200px;text-align:center;top:1247px;font-size:22px;line-height:22px;color:#a3a3a3;font-weight:400;">Edit</div>
<div class="t" style="left:1155.0px;top:1304px;font-size:22px;line-height:22px;color:#444;font-weight:400;">List of authorized domains. If not set, any domain is allowed.</div>
<div class="a" style="left:1111.0px;top:1409.5px;width:24.0px;height:24.0px;background:#fff;border:2.5px solid #767676;border-radius:7px;box-sizing:border-box;"></div>
<div class="t" style="left:1155.0px;top:1409px;font-size:22px;line-height:22px;color:#444;font-weight:400;">Allowed Groups</div>
<div class="a" style="left:1418.0px;top:1351.0px;width:768.0px;height:126.0px;background:#fff;border:2px solid #c9c9c9;border-radius:8px;box-sizing:border-box;box-shadow:inset 0 1px 1px rgba(0,0,0,0.05);"></div><svg class="a" style="left:2159.0px;top:1451.0px;" width="20" height="20" viewBox="0 0 20 20"><line x1="2" y1="18" x2="18" y2="2" stroke="#5a5a5a" stroke-width="2"/><line x1="10" y1="18" x2="18" y2="10" stroke="#5a5a5a" stroke-width="2"/></svg>
<div class="a" style="left:2196.0px;top:1453.0px;width:118.0px;height:42.5px;background:#f3f3f3;border:2px solid #d3d3d3;border-radius:8px;box-sizing:border-box;"></div><div class="t" style="left:1655.0px;width:1200px;text-align:center;top:1464px;font-size:22px;line-height:22px;color:#a3a3a3;font-weight:400;">Select</div>
<div class="t" style="left:1155.0px;top:1516px;font-size:22px;line-height:22px;color:#444;font-weight:400;">Required LDAP group(s) the users must belong to (one per line).</div>
<div class="t" style="left:1155.0px;top:1545px;font-size:22px;line-height:22px;color:#444;font-weight:400;">If set, users must be a member of at least one of the listed groups.</div>
<div class="t" style="left:1155.0px;top:1576px;font-size:22px;line-height:22px;color:#444;font-weight:400;">Additionally individual users can be selected too.</div>
<div class="a" style="left:1111.0px;top:1682.3px;width:24.0px;height:24.0px;background:#fff;border:2.5px solid #767676;border-radius:7px;box-sizing:border-box;"></div>
<div class="t" style="left:1155.0px;top:1682px;font-size:22px;line-height:22px;color:#444;font-weight:400;">Excluded Groups</div>
<div class="a" style="left:1418.0px;top:1623.0px;width:768.0px;height:126.0px;background:#fff;border:2px solid #c9c9c9;border-radius:8px;box-sizing:border-box;box-shadow:inset 0 1px 1px rgba(0,0,0,0.05);"></div><svg class="a" style="left:2159.0px;top:1723.0px;" width="20" height="20" viewBox="0 0 20 20"><line x1="2" y1="18" x2="18" y2="2" stroke="#5a5a5a" stroke-width="2"/><line x1="10" y1="18" x2="18" y2="10" stroke="#5a5a5a" stroke-width="2"/></svg>
<div class="a" style="left:2196.0px;top:1725.0px;width:118.0px;height:42.5px;background:#f3f3f3;border:2px solid #d3d3d3;border-radius:8px;box-sizing:border-box;"></div><div class="t" style="left:1655.0px;width:1200px;text-align:center;top:1736px;font-size:22px;line-height:22px;color:#a3a3a3;font-weight:400;">Select</div>
<div class="t" style="left:1155.0px;top:1788px;font-size:22px;line-height:22px;color:#444;font-weight:400;">Exclusion LDAP group(s) the users must not belong to (one per line).</div>
<div class="t" style="left:1155.0px;top:1818px;font-size:22px;line-height:22px;color:#444;font-weight:400;">If set, users must not be a member of any of the listed groups.</div>
<div class="a" style="left:1111.0px;top:1878.0px;width:24.0px;height:24.0px;background:#fff;border:2.5px solid #767676;border-radius:7px;box-sizing:border-box;"></div>
<div class="t" style="left:1155.0px;top:1878px;font-size:22px;line-height:22px;color:#444;font-weight:400;">Allowed Addresses</div>
<div class="a" style="left:1418.0px;top:1865.0px;width:898.0px;height:48.5px;background:#fff;border:2px solid #c9c9c9;border-radius:8px;box-sizing:border-box;box-shadow:inset 0 1px 1px rgba(0,0,0,0.05);"></div>
<div class="t" style="left:1155.0px;top:1939px;font-size:22px;line-height:22px;color:#444;font-weight:400;">Comma-separated list of IP addresses/networks the client must be accesses from (ex: 192.168.1.0/24).</div>
<div class="a" style="left:1418.0px;top:1984.0px;width:768.0px;height:49.0px;background:#fff;border:2px solid #c9c9c9;border-radius:8px;box-sizing:border-box;box-shadow:inset 0 1px 1px rgba(0,0,0,0.05);"></div>
<div class="a" style="left:2196.0px;top:1988.0px;width:118.0px;height:43.0px;background:#f3f3f3;border:2px solid #d3d3d3;border-radius:8px;box-sizing:border-box;"></div><div class="t" style="left:1655.0px;width:1200px;text-align:center;top:1996px;font-size:22px;line-height:22px;color:#a3a3a3;font-weight:400;"></div>
<div class="a" style="left:2692.0px;top:1862.0px;width:100.0px;height:100.0px;background:#ffa500;border-radius:50%;box-shadow:0 2px 8px rgba(0,0,0,0.18);"></div>
<svg class="a" style="left:2702.0px;top:1872.0px;" width="80" height="80" viewBox="2814 1948 80 80"><path d="M2846 2000.3 V2015.5 L2862 2000.3 H2875 A6 6 0 0 0 2881 1994.3 V1971.7 A6 6 0 0 0 2875 1965.7 H2835 A6 6 0 0 0 2829 1971.7 V1994.3 A6 6 0 0 0 2835 2000.3 Z" fill="none" stroke="#fff" stroke-width="5.6" stroke-linejoin="round"/><circle cx="2843.4" cy="1983.2" r="2.9" fill="#fff"/><circle cx="2855" cy="1983.2" r="2.9" fill="#fff"/><circle cx="2866.7" cy="1983.2" r="2.9" fill="#fff"/></svg>
</div>
<div id="frame"></div><div id="frame2"></div>
</body></html>
